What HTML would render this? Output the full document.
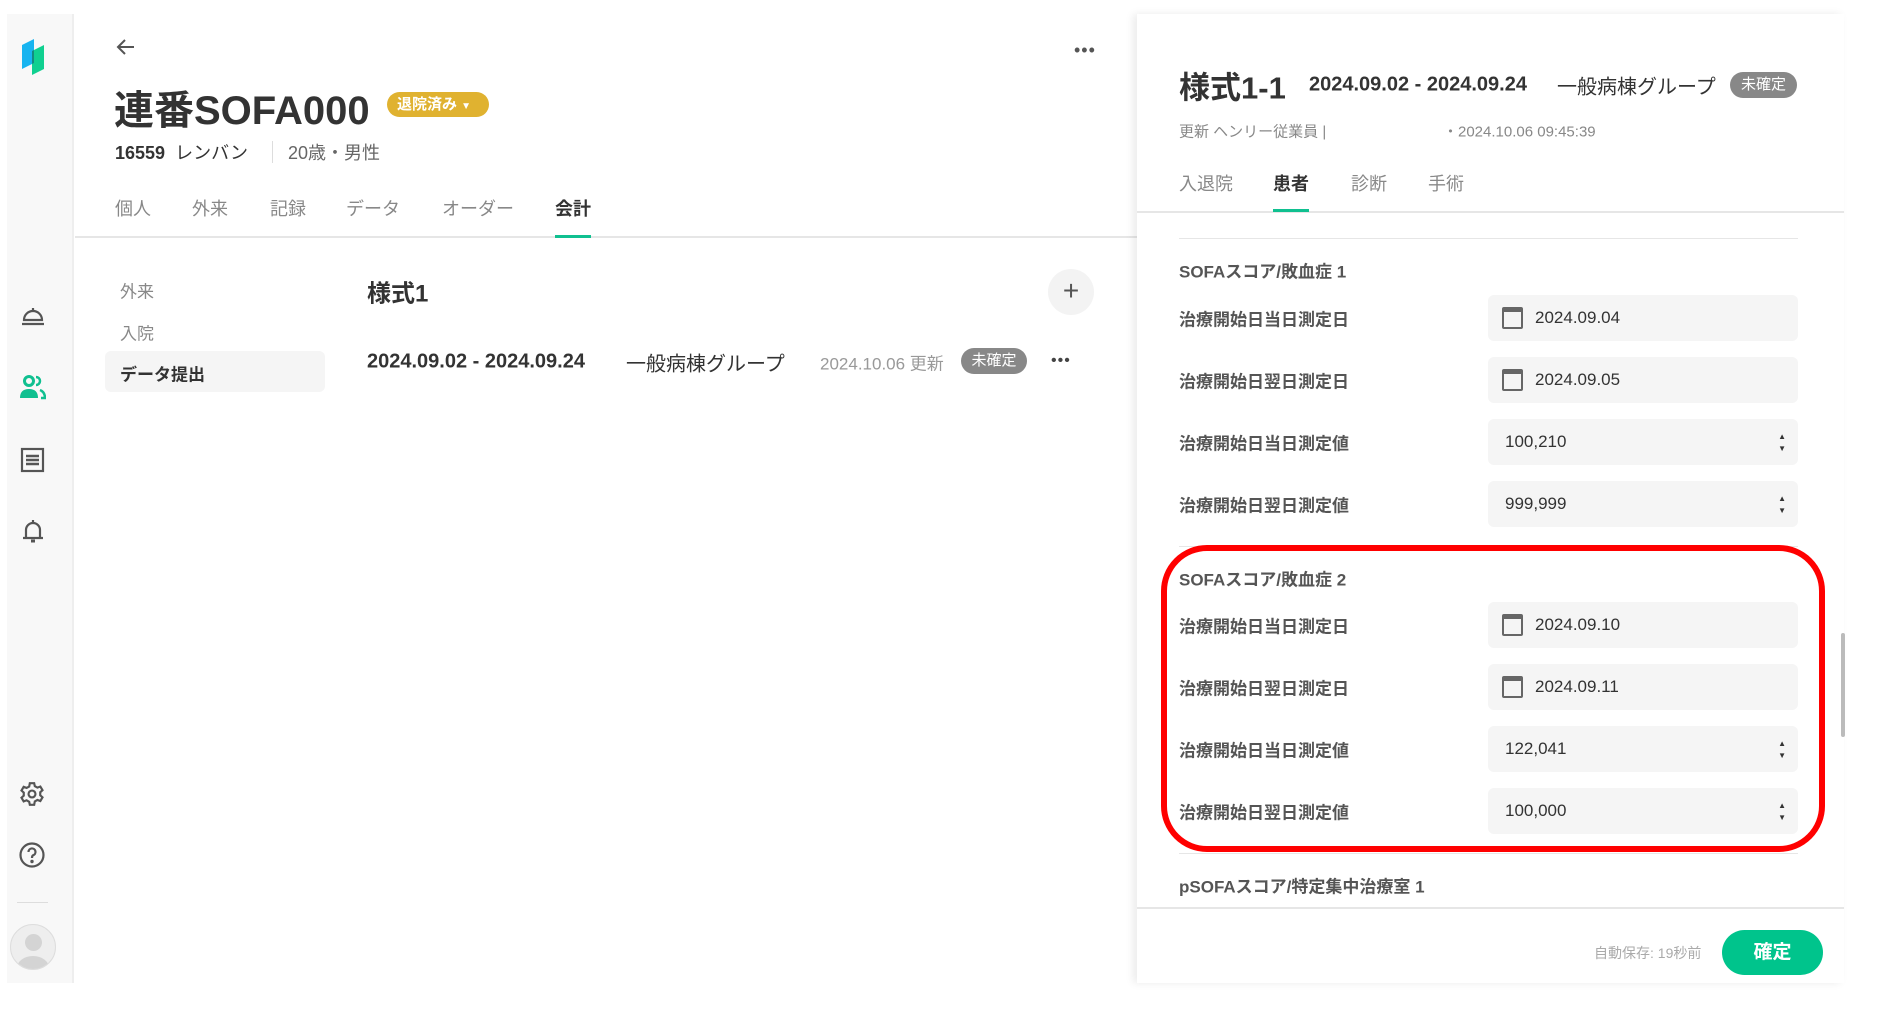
<!DOCTYPE html>
<html><head><meta charset="utf-8"><style>
*{margin:0;padding:0;box-sizing:border-box}
body{width:1879px;height:1025px;background:#fff;position:relative;overflow:hidden;font-family:"Liberation Sans","Noto Sans CJK JP",sans-serif;color:#333}
.a{position:absolute;white-space:nowrap}
.c{transform:translateY(-50%)}
.side{position:absolute;left:7px;top:14px;width:67px;height:969px;background:#f8f8f8;border-right:2px solid #eee}
.lbl{font-size:17px;font-weight:bold;color:#555}
.inp{position:absolute;left:1488px;width:310px;height:46px;background:#f5f5f5;border-radius:6px}
.inp span{position:absolute;top:50%;transform:translateY(-50%);font-size:17px;color:#333}
.cal{position:absolute;left:14px;top:12px;width:21px;height:22px;border:2.5px solid #666;border-top-width:5px;border-radius:2px}
.spin{position:absolute;right:12px;top:12px;font-size:8px;color:#333;line-height:12px;text-align:center}
.hl{position:absolute;height:1px;background:#e6e6e6}
</style></head><body>
<div class="side"></div>
<svg class="a" style="left:20px;top:37px" width="26" height="40" viewBox="0 0 26 40"><path d="M2 8 L14 2 L14 26 L2 32Z" fill="#18b4f0"/><path d="M12 14 L24 8 L24 32 L12 38Z" fill="#10d090"/><path d="M12 14 L14 13 L14 26 L12 27Z" fill="#148a80"/></svg>
<!-- sidebar icons -->
<svg class="a" style="left:20px;top:303px" width="26" height="24" viewBox="0 0 26 24" fill="none" stroke="#555" stroke-width="2.2"><path d="M4 17 A9 9 0 0 1 22 17 Z"/><path d="M2 21 H24"/><path d="M13 5 V8"/></svg>
<svg class="a" style="left:19px;top:374px" width="27" height="26" viewBox="0 0 27 26" fill="#10c090"><circle cx="10" cy="7" r="4.5" fill="none" stroke="#10c090" stroke-width="3"/><path d="M1 24 Q1 15 10 15 Q19 15 19 24Z"/><path d="M17 3 A4 4 0 0 1 17 11" fill="none" stroke="#10c090" stroke-width="2.5"/><path d="M21 16 Q26 18 26 24 H22" fill="none" stroke="#10c090" stroke-width="2.5"/></svg>
<svg class="a" style="left:20px;top:447px" width="25" height="26" viewBox="0 0 25 26" fill="none" stroke="#555" stroke-width="2.2"><rect x="2" y="2" width="21" height="22"/><path d="M6 9H19M6 13H19M6 17H19" stroke-width="2.5"/></svg>
<svg class="a" style="left:21px;top:518px" width="24" height="27" viewBox="0 0 24 27" fill="none" stroke="#555" stroke-width="2.2"><path d="M12 2 V4 M5 20 V12 A7 7 0 0 1 19 12 V20 M2 20 H22"/><path d="M10 23 H14" stroke-width="3"/></svg>
<svg class="a" style="left:19px;top:781px" width="26" height="26" viewBox="0 0 24 24" fill="none" stroke="#555" stroke-width="2"><circle cx="12" cy="12" r="3.2"/><path d="M10 2h4l.6 2.8 2.4 1.3 2.7-1 2 3.4-2.1 1.9v2.8l2.1 1.9-2 3.4-2.7-1-2.4 1.4L14 22h-4l-.6-2.8-2.4-1.4-2.7 1-2-3.4 2.1-1.9V10.7L2.3 8.8l2-3.4 2.7 1 2.4-1.3Z"/></svg>
<svg class="a" style="left:19px;top:842px" width="26" height="26" viewBox="0 0 26 26" fill="none" stroke="#555" stroke-width="2.2"><circle cx="13" cy="13" r="11.5"/><path d="M9.5 10 A3.5 3.5 0 1 1 14 13.3 Q13 14 13 16"/><circle cx="13" cy="19.5" r="0.6" fill="#555"/></svg>
<div class="a" style="left:17px;top:902px;width:31px;height:1px;background:#ddd"></div>
<div class="a" style="left:10px;top:924px;width:46px;height:46px;border-radius:50%;background:#eee;border:1px solid #ddd;overflow:hidden"><div style="position:absolute;left:14px;top:9px;width:17px;height:17px;border-radius:50%;background:#d4d4d4"></div><div style="position:absolute;left:6px;top:31px;width:32px;height:24px;border-radius:50%;background:#d4d4d4"></div></div>

<!-- main header -->
<svg class="a" style="left:116px;top:38px" width="20" height="18" viewBox="0 0 20 18" fill="none" stroke="#555" stroke-width="2"><path d="M18 9H3M9 2L2 9L9 16"/></svg>
<div class="a" style="left:1074px;top:40px;font-size:18px;color:#555;letter-spacing:1px">•••</div>
<div class="a c" style="left:114px;top:107px;font-size:40px;font-weight:bold;color:#333">連番SOFA000</div>
<div class="a" style="left:387px;top:92px;width:102px;height:25px;border-radius:13px;background:#e0b230;color:#fff;font-size:15px;font-weight:bold;line-height:25px;padding-left:10px">退院済み <span style="font-size:10px">▼</span></div>
<div class="a c" style="left:115px;top:152px;font-size:18px;color:#333"><b>16559</b>&nbsp; レンバン</div>
<div class="a" style="left:272px;top:141px;width:1px;height:22px;background:#ddd"></div>
<div class="a c" style="left:288px;top:152px;font-size:18px;color:#666">20歳・男性</div>
<div class="a c" style="left:115px;top:208px;font-size:18px;color:#888">個人</div>
<div class="a c" style="left:192px;top:208px;font-size:18px;color:#888">外来</div>
<div class="a c" style="left:270px;top:208px;font-size:18px;color:#888">記録</div>
<div class="a c" style="left:346px;top:208px;font-size:18px;color:#888">データ</div>
<div class="a c" style="left:442px;top:208px;font-size:18px;color:#888">オーダー</div>
<div class="a c" style="left:555px;top:208px;font-size:18px;color:#333;font-weight:bold">会計</div>
<div class="a" style="left:75px;top:236px;width:1062px;height:2px;background:#e6e6e6"></div>
<div class="a" style="left:555px;top:235px;width:36px;height:3px;background:#10c090"></div>

<div class="a c" style="left:120px;top:290px;font-size:17px;color:#888">外来</div>
<div class="a c" style="left:120px;top:332px;font-size:17px;color:#888">入院</div>
<div class="a" style="left:105px;top:351px;width:220px;height:41px;background:#f5f5f5;border-radius:6px"></div>
<div class="a c" style="left:120px;top:373px;font-size:17px;font-weight:bold;color:#333">データ提出</div>

<div class="a c" style="left:367px;top:291px;font-size:24px;font-weight:bold;color:#333">様式1</div>
<div class="a" style="left:1048px;top:269px;width:46px;height:46px;border-radius:50%;background:#f3f3f3;color:#555;font-size:28px;line-height:44px;text-align:center">+</div>
<div class="a c" style="left:367px;top:362px;font-size:20px;font-weight:bold;color:#333">2024.09.02 - 2024.09.24</div>
<div class="a c" style="left:626px;top:362px;font-size:20px;color:#333">一般病棟グループ</div>
<div class="a c" style="left:820px;top:362px;font-size:17px;color:#999">2024.10.06 更新</div>
<div class="a" style="left:961px;top:348px;width:66px;height:26px;border-radius:13px;background:#888;color:#fff;font-size:15px;line-height:26px;text-align:center">未確定</div>
<div class="a" style="left:1051px;top:352px;font-size:16px;color:#444;letter-spacing:1px">•••</div>

<!-- right panel -->
<div class="a" style="left:1137px;top:14px;width:707px;height:969px;background:#fff;box-shadow:-4px 0 8px rgba(0,0,0,0.08)"></div>
<div class="a c" style="left:1179px;top:85px;font-size:31px;font-weight:bold;color:#333">様式1-1</div>
<div class="a c" style="left:1309px;top:85px;font-size:20px;font-weight:bold;color:#333">2024.09.02 - 2024.09.24</div>
<div class="a c" style="left:1557px;top:85px;font-size:20px;color:#333">一般病棟グループ</div>
<div class="a" style="left:1730px;top:72px;width:67px;height:26px;border-radius:13px;background:#888;color:#fff;font-size:15px;line-height:26px;text-align:center">未確定</div>
<div class="a c" style="left:1179px;top:131px;font-size:15px;color:#888">更新 ヘンリー従業員 |</div>
<div class="a c" style="left:1443px;top:131px;font-size:15px;color:#888">・2024.10.06 09:45:39</div>
<div class="a c" style="left:1179px;top:183px;font-size:18px;color:#888">入退院</div>
<div class="a c" style="left:1273px;top:183px;font-size:18px;color:#333;font-weight:bold">患者</div>
<div class="a c" style="left:1351px;top:183px;font-size:18px;color:#888">診断</div>
<div class="a c" style="left:1428px;top:183px;font-size:18px;color:#888">手術</div>
<div class="a" style="left:1137px;top:211px;width:707px;height:2px;background:#e6e6e6"></div>
<div class="a" style="left:1273px;top:209px;width:36px;height:3px;background:#10c090"></div>
<div class="hl" style="left:1179px;top:238px;width:619px"></div>

<div class="a c lbl" style="left:1179px;top:270px">SOFAスコア/敗血症 1</div>
<div class="a c lbl" style="left:1179px;top:318px">治療開始日当日測定日</div>
<div class="inp" style="top:295px"><div class="cal"></div><span style="left:47px">2024.09.04</span></div>
<div class="a c lbl" style="left:1179px;top:380px">治療開始日翌日測定日</div>
<div class="inp" style="top:357px"><div class="cal"></div><span style="left:47px">2024.09.05</span></div>
<div class="a c lbl" style="left:1179px;top:442px">治療開始日当日測定値</div>
<div class="inp" style="top:419px"><span style="left:17px">100,210</span><div class="spin">▲<br>▼</div></div>
<div class="a c lbl" style="left:1179px;top:504px">治療開始日翌日測定値</div>
<div class="inp" style="top:481px"><span style="left:17px">999,999</span><div class="spin">▲<br>▼</div></div>
<div class="hl" style="left:1179px;top:546px;width:619px"></div>

<div class="a c lbl" style="left:1179px;top:578px">SOFAスコア/敗血症 2</div>
<div class="a c lbl" style="left:1179px;top:625px">治療開始日当日測定日</div>
<div class="inp" style="top:602px"><div class="cal"></div><span style="left:47px">2024.09.10</span></div>
<div class="a c lbl" style="left:1179px;top:687px">治療開始日翌日測定日</div>
<div class="inp" style="top:664px"><div class="cal"></div><span style="left:47px">2024.09.11</span></div>
<div class="a c lbl" style="left:1179px;top:749px">治療開始日当日測定値</div>
<div class="inp" style="top:726px"><span style="left:17px">122,041</span><div class="spin">▲<br>▼</div></div>
<div class="a c lbl" style="left:1179px;top:811px">治療開始日翌日測定値</div>
<div class="inp" style="top:788px"><span style="left:17px">100,000</span><div class="spin">▲<br>▼</div></div>
<div class="hl" style="left:1179px;top:853px;width:619px"></div>
<div class="a c lbl" style="left:1179px;top:885px">pSOFAスコア/特定集中治療室 1</div>
<div class="a" style="left:1161px;top:545px;width:664px;height:307px;border:6px solid #f00;border-radius:46px"></div>
<div class="a" style="left:1841px;top:633px;width:4px;height:104px;background:#bbb;border-radius:2px"></div>
<div class="a" style="left:1137px;top:907px;width:707px;height:2px;background:#e6e6e6"></div>
<div class="a c" style="left:1594px;top:953px;font-size:14px;color:#aaa">自動保存: 19秒前</div>
<div class="a" style="left:1722px;top:930px;width:101px;height:45px;border-radius:23px;background:#00c48c;color:#fff;font-size:19px;font-weight:bold;line-height:45px;text-align:center">確定</div>
</body></html>
